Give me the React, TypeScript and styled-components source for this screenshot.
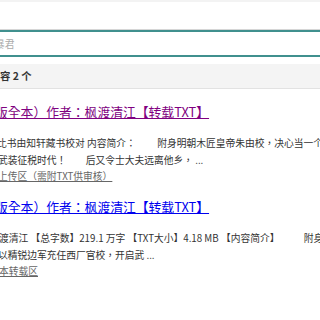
import styled, { createGlobalStyle } from "styled-components";

const GlobalStyle = createGlobalStyle`
  html, body {
    margin: 0;
    padding: 0;
    background: #fff;
  }
  body {
    font-family: "Noto Sans CJK TC", "Noto Sans CJK SC", "Noto Sans", sans-serif;
    color: #333;
  }
`;

interface Result {
  title: string;
  visited: boolean;
  lines: { text: string; shift: number }[];
  source: string;
  sourceShift: number;
}

const results: Result[] = [
  {
    title: "版全本）作者：枫渡清江【转载TXT】",
    visited: true,
    lines: [
      {
        text: "比书由知轩藏书校对 内容简介：　　 附身明朝木匠皇帝朱由校，决心当一个",
        shift: -3,
      },
      { text: "武装征税时代！　　后又令士大夫远离他乡， ...", shift: -2 },
    ],
    source: "上传区（需附TXT供审核）",
    sourceShift: -2,
  },
  {
    title: "版全本）作者：枫渡清江【转载TXT】",
    visited: false,
    lines: [
      {
        text: "渡清江 【总字数】219.1 万字 【TXT大小】4.18 MB 【内容简介】　　　附身",
        shift: -1,
      },
      { text: "以精锐边军充任西厂官校，开启武 ...", shift: -2 },
    ],
    source: "本转载区",
    sourceShift: -1,
  },
];

const Page = styled.div`
  width: 320px;
  height: 320px;
  overflow: hidden;
`;

const TopStrip = styled.div`
  height: 2px;
  background: #f3f3f3;
`;

const SearchBox = styled.div`
  margin-top: 27px;
  border-top: 1px solid #d6d6d6;
`;

const SearchInput = styled.input<{ $shift: number }>`
  display: block;
  box-sizing: border-box;
  width: 100%;
  height: 27px;
  margin: 0;
  padding: 0;
  border: none;
  border-top: 2px solid #40908e;
  border-bottom: 2px solid #40908e;
  outline: none;
  background: #fff;
  font-family: inherit;
  font-size: 9.75px;
  text-indent: ${(p) => p.$shift}px;
  &::placeholder {
    color: #aaa;
  }
`;

const CountBar = styled.div`
  margin-top: 7px;
  height: 24px;
  line-height: 24px;
  background: #f4f4f4;
  border-bottom: 1px solid #e2e2e2;
  font-size: 10.4px;
  font-weight: bold;
  color: #333;
  white-space: nowrap;
`;

const List = styled.div`
  padding-top: 15px;
  display: flex;
  flex-direction: column;
  gap: 16px;
`;

const Item = styled.div`
  display: flex;
  flex-direction: column;
`;

const Title = styled.a<{ $visited: boolean }>`
  display: block;
  font-size: 12.8px;
  line-height: 16px;
  color: ${(p) => (p.$visited ? "#800080" : "#0000ee")};
  text-decoration: underline;
  text-indent: -5px;
  white-space: nowrap;
  cursor: pointer;
`;

const Summary = styled.div`
  margin-top: 15px;
  font-size: 9.75px;
  line-height: 17px;
  color: #333;
`;

const Line = styled.div<{ $shift: number }>`
  white-space: nowrap;
  text-indent: ${(p) => p.$shift}px;
`;

const Source = styled.a<{ $shift: number }>`
  display: block;
  font-size: 9.75px;
  line-height: 14px;
  color: #666;
  text-decoration: underline;
  white-space: nowrap;
  text-indent: ${(p) => p.$shift}px;
`;

const App = () => {
  return (
    <Page>
      <GlobalStyle />
      <TopStrip />
      <SearchBox>
        <SearchInput placeholder="暴君" $shift={-5} readOnly />
      </SearchBox>
      <CountBar>容 2 个</CountBar>
      <List>
        {results.map((r, i) => (
          <Item key={i}>
            <Title $visited={r.visited}>{r.title}</Title>
            <Summary>
              {r.lines.map((l, j) => (
                <Line key={j} $shift={l.shift}>
                  {l.text}
                </Line>
              ))}
            </Summary>
            <Source $shift={r.sourceShift}>{r.source}</Source>
          </Item>
        ))}
      </List>
    </Page>
  );
};

export default App;
